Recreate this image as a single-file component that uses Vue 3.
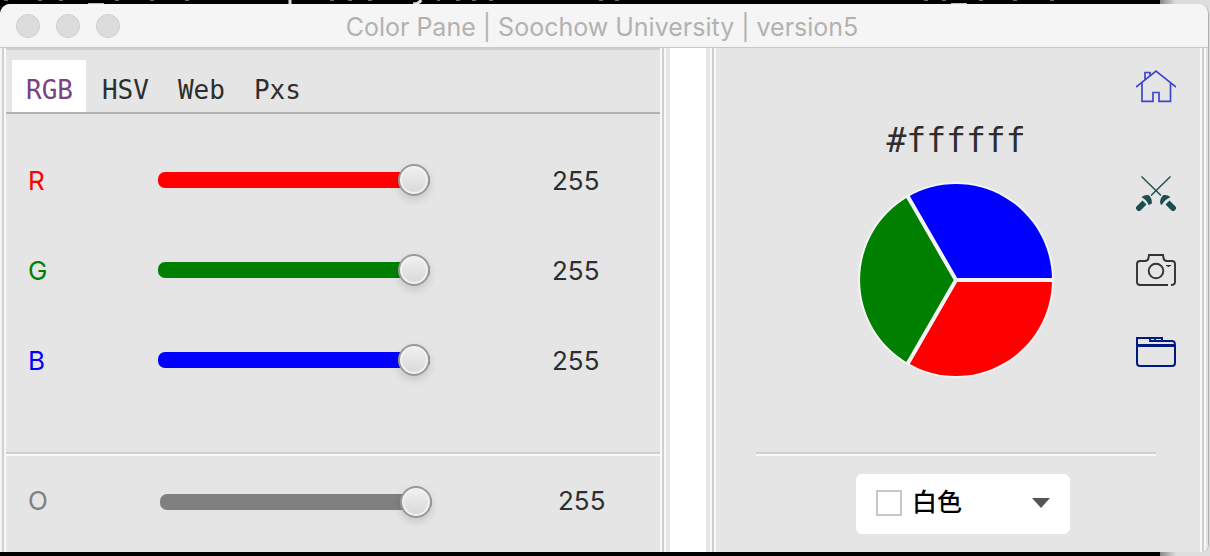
<script setup>
import { ref, computed } from 'vue'

const tabs = ['RGB', 'HSV', 'Web', 'Pxs']
const active = ref('RGB')
const channels = ref([
  { id: 'R', color: 'red', value: 255 },
  { id: 'G', color: 'green', value: 255 },
  { id: 'B', color: 'blue', value: 255 },
])
const opacity = ref(255)
const hex = computed(
  () => '#' + channels.value.map((c) => Number(c.value).toString(16).padStart(2, '0')).join('')
)
</script>

<template>
  <div class="desktop">
    <svg class="backdrop" height="4" viewBox="0 0 1160 4" preserveAspectRatio="xMinYMin meet" fill="none" aria-hidden="true">
      <path stroke="#666" stroke-width="1" d="M4 0.500h4M38 0.500h4M59 0.500h4M115 0.500h4M150 0.500h4M185 0.500h4M330 0.500h4M348 0.500h4M368 0.500h4M437 0.500h3M456 0.500h4M472 0.500h4M489 0.500h4M599 0.500h4M615 0.500h4M924 0.500h4M942 0.500h4M979 0.500h4M1013 0.500h4M1050 0.500h4" />
      <path stroke="#bbb" d="M88 3.500H104M951 3.500H967" />
      <path stroke="#ddd" stroke-width="3" d="M290 0V4M421 0Q419 4 413 4" />
    </svg>
    <main class="window">
      <header class="titlebar">
        <div class="lights">
          <button aria-label="Close"></button>
          <button aria-label="Minimise"></button>
          <button aria-label="Zoom"></button>
        </div>
        <h1>Color Pane | Soochow University | version5</h1>
      </header>
      <div class="body">
        <section class="pane left">
          <nav class="tabs" role="tablist">
            <button
              v-for="t in tabs"
              :key="t"
              role="tab"
              :aria-selected="active === t"
              :class="{ on: active === t }"
              @click="active = t"
            >{{ t }}</button>
          </nav>
          <div class="sliders">
            <div v-for="c in channels" :key="c.id" class="row" :class="c.color">
              <label :for="'ch' + c.id">{{ c.id }}</label>
              <input :id="'ch' + c.id" v-model="c.value" type="range" min="0" max="255" />
              <output :for="'ch' + c.id">{{ c.value }}</output>
            </div>
          </div>
          <div class="row gray">
            <label for="chO">O</label>
            <input id="chO" v-model="opacity" type="range" min="0" max="255" />
            <output for="chO">{{ opacity }}</output>
          </div>
        </section>
        <section class="pane right">
          <div class="top">
            <div class="preview">
              <p class="hex">{{ hex }}</p>
              <svg class="pie" width="198" height="198" viewBox="-99 -99 198 198" role="img" aria-label="Color wheel">
                <g stroke="#f4f4f4" stroke-width="4" stroke-linejoin="round">
                  <circle r="97" fill="#f4f4f4" stroke-width="2" />
                  <path fill="#f00" stroke="none" d="M0 0H96A96 96 0 0 1 -48 83.1Z" />
                  <path fill="#008000" stroke="none" d="M0 0L-48 83.1A96 96 0 0 1 -48 -83.1Z" />
                  <path fill="#00f" stroke="none" d="M0 0L-48 -83.1A96 96 0 0 1 96 0Z" />
                  <path fill="none" d="M97 0H0L-48.500 84M0 0L-48.500 -84" />
                </g>
              </svg>
            </div>
            <div class="icons">
              <button class="home" aria-label="Home">
                <svg width="40" height="40" viewBox="0 0 40 40" fill="none" stroke="#3d46cf" stroke-width="1.700">
                  <path d="M0 21L20 5L40 21M6 17V35.300H17V26.500H23V35.300H34.500V17M9 14V6.500H14V10" />
                </svg>
              </button>
              <button class="swords" aria-label="Swords">
                <svg width="40" height="40" viewBox="0 0 40 40" fill="#1c4d50">
                  <path d="M5.500 3.500L25 22.500M34.500 3.500L15 22.500" stroke="#1c4d50" stroke-width="1.400" fill="none" />
                  <path d="M5.500 24Q8.500 21.500 12.500 22Q17 26 15.500 31L12.500 32Q11 27 5.500 24Z" />
                  <path d="M34.500 24Q31.500 21.500 27.500 22Q23 26 24.500 31L26 32Q28 27 34.500 24Z" />
                  <path d="M6.500 27.500L10.500 31.500L4 38H2L0 36V34Z" />
                  <path d="M33.500 27.500L29.500 31.500L36 38H38L40 36V34Z" />
                </svg>
              </button>
              <button class="camera" aria-label="Camera">
                <svg width="40" height="40" viewBox="0 0 40 40" fill="none" stroke="#333" stroke-width="1.900">
                  <path d="M32 35H4Q1 35 1 32V14Q1 11 4 11H9Q12 11 12.500 8Q13 5 13 5H27Q27 5 27.500 8Q28 11 31 11H36Q39 11 39 14V32Q39 35 35 35" />
                  <circle cx="20" cy="21" r="7.300" />
                  <path d="M30 15.500H35M31.500 16.500H33.500" stroke-width="1.200" />
                </svg>
              </button>
              <button class="folder" aria-label="Folder">
                <svg width="40" height="40" viewBox="0 0 40 40" fill="none" stroke="#001a80" stroke-width="2">
                  <path d="M1 13V6H26V9H36Q39 9 39 13V31Q39 34 36 34H4Q1 34 1 31V13" />
                  <path d="M1 13.500H39" stroke-width="3" />
                  <path d="M14 6V9H27M19 6V9" stroke-width="1.800" />
                </svg>
              </button>
            </div>
          </div>
          <div class="picker">
            <div class="combo">
              <span class="swatch"></span>
              <select aria-label="Color">
                <option>白色</option>
              </select>
              <svg class="arrow" width="18" height="10" viewBox="0 0 18 10" aria-hidden="true">
                <path d="M0 0H18L9 10Z" fill="#555" />
              </svg>
            </div>
          </div>
        </section>
      </div>
    </main>
  </div>
</template>

<style>
body { background: #000; }
</style>

<style scoped>
* { box-sizing: border-box; }
.desktop {
  min-height: 100vh;
  display: flex;
  flex-direction: column;
  background: linear-gradient(90deg, #888, #ddd 16px) right / 50px 100% no-repeat #000;
  padding-bottom: 4px;
  font-family: Inter, "Liberation Sans", "Noto Sans CJK SC", sans-serif;
  color: #2e2e2e;
}
button { border: 0; padding: 0; margin: 0; background: none; font: inherit; color: inherit; }
.backdrop { display: block; align-self: flex-start; }
.window {
  flex: 1;
  display: flex;
  flex-direction: column;
  margin-right: 1px;
  border-right: 1px solid #b0b0b0;
  border-radius: 10px 10px 8px 0;
  background: #e5e5e5;
  overflow: hidden;
}
.titlebar {
  height: 44px;
  display: grid;
  grid-template-columns: 1fr auto 1fr;
  align-items: center;
  background: #f5f5f5;
  border-bottom: 1px solid #c9c9c9;
  padding: 2px 20px 0 16px;
}
.lights { display: flex; gap: 16px; padding-bottom: 2px; }
.lights button { width: 24px; height: 24px; border-radius: 50%; background: #dcdcdc; border: 1px solid #cecece; }
h1 { margin: 0; font-weight: 400; font-size: 25px; line-height: 32px; color: #b2b2b2; white-space: nowrap; }
.body { flex: 1; display: grid; grid-template-columns: 670fr 502fr; gap: 36px; background: #fff; }
.pane { display: flex; flex-direction: column; background: #e5e5e5; min-width: 0; }
.left {
  border-left: 2px solid #f4f4f4;
  border-right: 4px solid #e5e5e5;
  box-shadow: inset 2px 0 #cfcfcf, inset 4px 0 #f8f8f8, inset -2px 0 #f8f8f8, inset -4px 0 #cfcfcf, inset -6px 0 #f8f8f8;
  padding: 0 6px 0 4px;
}
.right {
  border-left: 4px solid #e5e5e5;
  border-right: 2px solid #e5e5e5;
  box-shadow: inset 2px 0 #f8f8f8, inset 4px 0 #cfcfcf, inset 6px 0 #f8f8f8, inset -2px 0 #f8f8f8, inset -4px 0 #cfcfcf, inset -6px 0 #f8f8f8;
  padding: 0 6px;
}
.tabs {
  display: flex;
  gap: 2px;
  height: 66px;
  padding: 10px 6px 0;
  border-top: 2px solid #cfcfcf;
  border-bottom: 2px solid #b3b3b3;
}
.tabs button { padding: 8px 13px 0 14px; font: 26px/32px "DejaVu Sans Mono", monospace; }
.tabs .on { background: #fff; color: #7a4380; }
.sliders { flex: 1; padding-top: 21px; }
.row {
  display: grid;
  grid-template-columns: 152fr 272fr 122fr 108fr;
  align-items: center;
  height: 90px;
  font-size: 26px;
  line-height: 32px;
}
.row label { padding-left: 22px; color: var(--c); }
.row output { grid-column: 4; }
.sliders label, .sliders output { padding-top: 2px; }
.red { --c: red; }
.green { --c: green; }
.blue { --c: blue; }
.gray {
  --c: gray;
  height: 100px;
  grid-template-columns: 154fr 272fr 126fr 102fr;
  border-top: 2px solid #cfcfcf;
  box-shadow: inset 0 2px #f8f8f8;
  padding-bottom: 2px;
}
.gray label, .gray output { padding-bottom: 2px; }
input {
  appearance: none;
  width: 100%;
  height: 32px;
  margin: 0;
  background: none;
}
input::-webkit-slider-runnable-track {
  height: 16px;
  border-radius: 7px;
  background: var(--c);
}
input::-webkit-slider-thumb {
  appearance: none;
  width: 32px;
  height: 32px;
  margin-top: -8px;
  border-radius: 50%;
  border: 2px solid #999;
  background: linear-gradient(#f1f1f1, #d8d8d8);
  box-shadow: inset 0 0 0 2px #f2f2f2, 0 4px 8px #0002;
}
.top {
  flex: 1;
  display: grid;
  grid-template-columns: 60px 1fr 60px;
  padding-right: 4px;
}
.preview { grid-column: 2; display: flex; flex-direction: column; align-items: center; }
.hex { margin: 73px 0 20px; font: 33px/40px "DejaVu Sans Mono", monospace; }
.icons { display: flex; flex-direction: column; align-items: flex-start; padding-top: 18px; }
.icons button { height: 40px; }
.icons svg, .pie { display: block; }
.icons .swords { margin-top: 67px; }
.icons .camera { margin-top: 37px; }
.icons .folder { margin-top: 42px; }
.picker {
  height: 100px;
  margin: 0 44px 0 40px;
  padding: 20px 0 0 14px;
  border-top: 2px solid #cfcfcf;
  box-shadow: inset 0 2px #f8f8f8;
  display: flex;
  justify-content: center;
  align-items: flex-start;
}
.combo {
  display: grid;
  grid-template-columns: 214px;
  align-items: center;
  height: 60px;
}
.combo > * { grid-area: 1 / 1; }
select {
  appearance: none;
  width: 100%;
  height: 60px;
  border: 0;
  border-radius: 6px;
  background: #fff;
  color: #000;
  padding: 0 40px 8px 56px;
  font: 500 25px/32px "Noto Sans CJK SC", sans-serif;
}
.swatch { z-index: 1; width: 26px; height: 26px; margin: 0 0 2px 20px; border: 2px solid #c8c8c8; pointer-events: none; }
.arrow { z-index: 1; justify-self: end; margin: 0 20px 2px 0; pointer-events: none; }
</style>
